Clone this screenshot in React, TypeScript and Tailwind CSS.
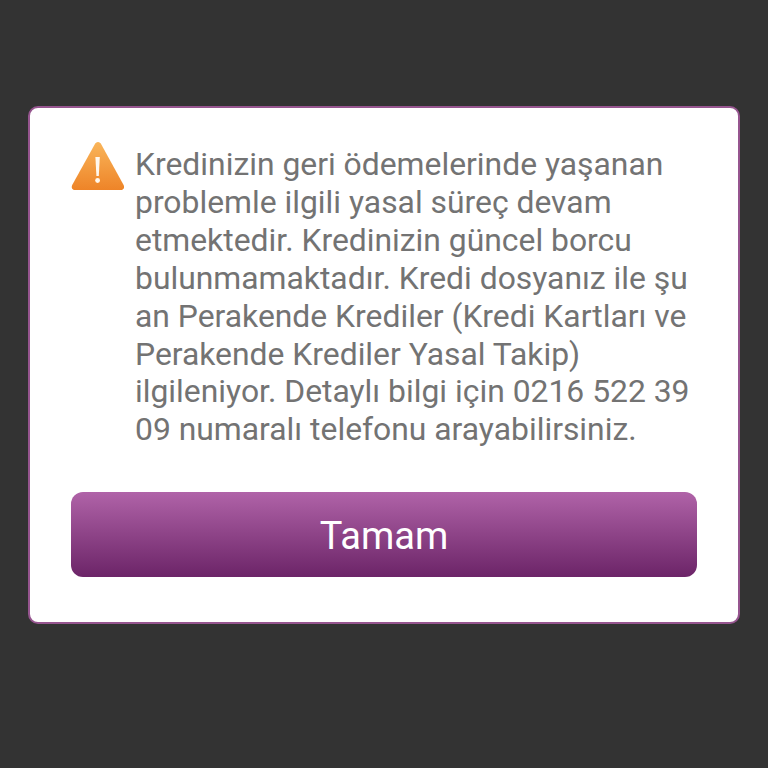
export default function App() {
  return (
    <div className="w-[768px] h-[768px] bg-[#333333] flex items-start justify-center pt-[106px]" style={{ fontFamily: 'Roboto, sans-serif' }}>
      <div className="w-[712px] h-[518px] bg-white border-2 border-[#96558f] rounded-[10px] pt-[33px] px-[41px]">
        {/* Message */}
        <div className="flex items-start">
          <svg className="w-[54px] h-[50px] shrink-0" viewBox="0 0 54 50">
            <defs>
              <linearGradient id="warn" x1="0" y1="0" x2="0" y2="1">
                <stop offset="0" stopColor="#f9b55a" />
                <stop offset="1" stopColor="#ee8428" />
              </linearGradient>
            </defs>
            <path d="M27 1 C28.5 1 29.5 2 30.2 3.2 L52.6 44 C53.8 46.4 52.6 49 50 49 L3.8 49 C1.2 49 0 46.4 1.2 44 L23.8 3.2 C24.5 2 25.5 1 27 1 Z" fill="url(#warn)" />
            <path d="M24.4 16 L28.8 16 L27.8 35 L25.4 35 Z" fill="#fff8ee" />
            <circle cx="26.6" cy="39.5" r="2.4" fill="#fff8ee" />
          </svg>
          <p className="ml-[10px] w-[565px] mt-[5px] text-[31.85px] leading-[37.9px] text-[#737373] whitespace-nowrap">
            Kredinizin geri ödemelerinde yaşanan<br />
            problemle ilgili yasal süreç devam<br />
            etmektedir. Kredinizin güncel borcu<br />
            bulunmamaktadır. Kredi dosyanız ile şu<br />
            an Perakende Krediler (Kredi Kartları ve<br />
            Perakende Krediler Yasal Takip)<br />
            ilgileniyor. Detaylı bilgi için 0216 522 39<br />
            09 numaralı telefonu arayabilirsiniz.
          </p>
        </div>
        <button className="mt-[43px] w-full h-[85px] pt-[3px] rounded-[12px] bg-gradient-to-b from-[#b063a8] to-[#6c2468] text-white text-[38px]">
          Tamam
        </button>
      </div>
    </div>
  )
}
